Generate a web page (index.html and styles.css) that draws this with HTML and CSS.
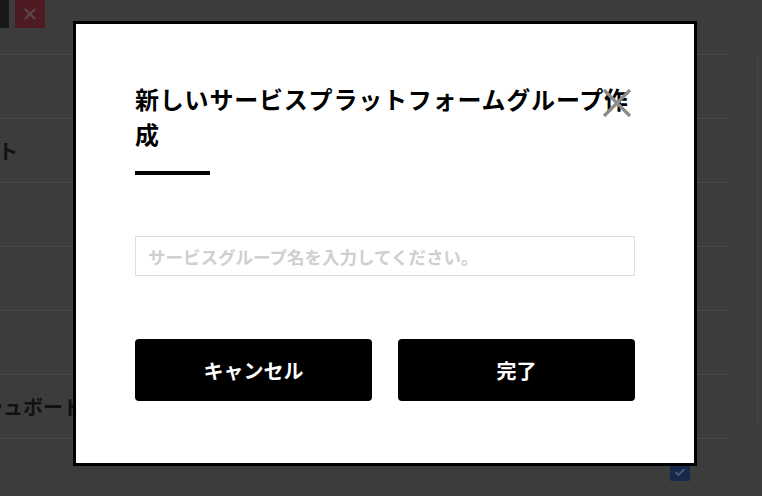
FILE: index.html
```html
<!DOCTYPE html>
<html lang="ja">
<head>
    <meta charset="UTF-8">
    <meta name="viewport" content="width=device-width, initial-scale=1.0">
    <title>サービスグループ</title>
    <link rel="stylesheet" href="styles.css">
</head>
<body>
    <div class="page">
        <div class="main">
            <div class="toolbar">
                <span class="tool tool-dark"></span>
                <span class="tool tool-red">
                    <svg width="14" height="14" viewBox="0 0 14 14"><path d="M2 2L12 12M12 2L2 12" stroke="#5a4448" stroke-width="2.4"/></svg>
                </span>
            </div>
            <ul class="rows">
                <li class="row"></li>
                <li class="row"><span class="row-label label-list">サービスリスト</span></li>
                <li class="row"></li>
                <li class="row"></li>
                <li class="row"></li>
                <li class="row"><span class="row-label label-dash">ダッシュボード</span></li>
                <li class="row row-end">
                    <span class="check">
                        <svg width="12" height="10" viewBox="0 0 12 10"><path d="M1.5 5L4.5 8L10.5 2" fill="none" stroke="#4a5870" stroke-width="1.8"/></svg>
                    </span>
                </li>
            </ul>
        </div>
        <div class="side"></div>
    </div>

    <div class="modal">
        <button class="modal-close" aria-label="閉じる">
            <svg width="32" height="32" viewBox="0 0 32 32"><path d="M3 3L29 29M29 3L3 29" stroke="#8c8c8c" stroke-width="3.2"/></svg>
        </button>
        <h2 class="modal-title">新しいサービスプラットフォームグループ作成</h2>
        <div class="modal-rule"></div>
        <input class="modal-input" type="text" placeholder="サービスグループ名を入力してください。">
        <div class="modal-actions">
            <button class="btn">キャンセル</button>
            <button class="btn">完了</button>
        </div>
    </div>
</body>
</html>
```

FILE: styles.css
```css
html, body {
    margin: 0;
    height: 100%;
}
body {
    font-family: "Noto Sans CJK JP", "Noto Sans", sans-serif;
    background-color: #3c3c3c;
    overflow: hidden;
}
.page {
    display: flex;
}
.main {
    width: 726px;
}
.toolbar {
    display: flex;
    gap: 6px;
    height: 54px;
    margin-left: -20px;
}
.tool {
    width: 30px;
    height: 28px;
    display: flex;
    align-items: center;
    justify-content: center;
}
.tool-dark {
    background-color: #181818;
    width: 29px;
}
.tool-red {
    background-color: #4e1b22;
}
.rows {
    list-style: none;
    margin: 0;
    padding: 0;
}
.row {
    height: 63px;
    border-top: 1px solid #484848;
    display: flex;
    align-items: center;
    overflow: hidden;
}
.row-end {
    justify-content: flex-end;
    padding-right: 36px;
    align-items: flex-start;
    padding-top: 23px;
    height: 40px;
}
.row-label {
    font-size: 20px;
    font-weight: bold;
    color: #111;
    white-space: nowrap;
}
.label-list {
    margin-left: -122px;
}
.label-dash {
    margin-left: -57px;
}
.check {
    width: 20px;
    height: 19px;
    border-radius: 2px;
    background-color: #16294a;
    display: flex;
    align-items: center;
    justify-content: center;
}
.side {
    margin-left: 31px;
    margin-top: 54px;
    height: 374px;
    border-left: 1px solid #454545;
    flex: 1;
}

.modal {
    position: fixed;
    left: 73px;
    top: 21px;
    width: 500px;
    background-color: #fff;
    border: 3px solid #000;
    padding: 57px 59px 62px;
}
.modal-close {
    position: absolute;
    left: 525px;
    top: 63px;
    width: 32px;
    height: 32px;
    padding: 0;
    border: none;
    background: none;
    cursor: pointer;
}
.modal-title {
    margin: 0;
    font-size: 24px;
    line-height: 35px;
    letter-spacing: 0.8px;
    font-weight: bold;
    color: #000;
}
.modal-rule {
    width: 75px;
    height: 4px;
    background-color: #000;
    margin-top: 20px;
}
.modal-input {
    display: block;
    box-sizing: border-box;
    width: 100%;
    height: 40px;
    margin-top: 61px;
    padding: 0 12px;
    border: 1px solid #dedede;
    font-family: inherit;
    font-size: 17.5px;
    font-weight: bold;
    outline: none;
}
.modal-input::placeholder {
    color: #cfcfcf;
}
.modal-actions {
    display: flex;
    gap: 26px;
    margin-top: 63px;
}
.btn {
    flex: 1;
    height: 62px;
    border: none;
    border-radius: 4px;
    background-color: #000;
    color: #fff;
    font-family: inherit;
    font-size: 20px;
    font-weight: bold;
    cursor: pointer;
}
```
